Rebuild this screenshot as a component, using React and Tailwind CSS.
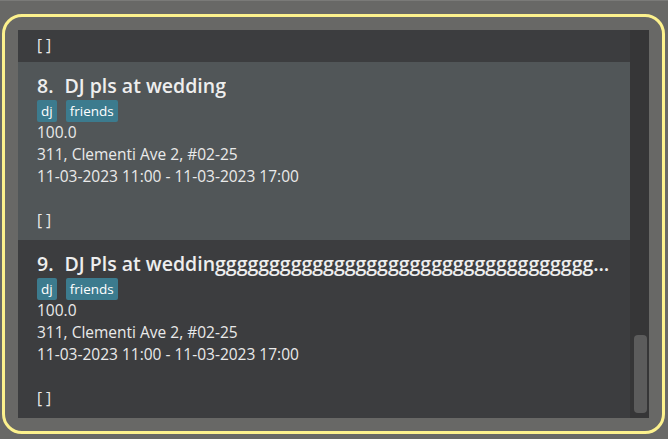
import React from 'react'

const font = { fontFamily: '"Open Sans", "Noto Sans", sans-serif' }

const events = [
  {
    idx: 8,
    name: 'DJ pls at wedding',
    tags: ['dj', 'friends'],
    rate: '100.0',
    address: '311, Clementi Ave 2, #02-25',
    time: '11-03-2023 11:00 - 11-03-2023 17:00',
    selected: true,
  },
  {
    idx: 9,
    name: 'DJ Pls at wedding' + 'g'.repeat(60),
    tags: ['dj', 'friends'],
    rate: '100.0',
    address: '311, Clementi Ave 2, #02-25',
    time: '11-03-2023 11:00 - 11-03-2023 17:00',
    selected: false,
  },
]

function EventCard({ ev }) {
  return (
    <div className={`h-[178px] pl-[19px] pr-[14px] pt-[10px] pb-[9px] ${ev.selected ? 'bg-[#515658]' : 'bg-[#3c3d3f]'}`}>
      <div className="flex h-[27px] items-center text-[19.5px] font-semibold leading-[27px] text-[#eeeeee]">
        <span className="shrink-0">{ev.idx}.</span>
        <span className="ml-[11px] truncate">{ev.name}</span>
      </div>
      <div className="mt-[1px] flex h-[22px] gap-[9px]">
        {ev.tags.map(t => (
          <span key={t} className="rounded-[2px] bg-[#3c7b8e] px-[4px] text-[13.5px] leading-[22px] text-white">{t}</span>
        ))}
      </div>
      <div className="-mt-[1px] text-[15.5px] leading-[22px] text-[#eaeaea]">
        <div>{ev.rate}</div>
        <div>{ev.address}</div>
        <div>{ev.time}</div>
        <div>&nbsp;</div>
        <div>[ ]</div>
      </div>
    </div>
  )
}

export default function App() {
  return (
    <div className="h-[439px] w-[668px] overflow-hidden border-t border-[#7a7a78] bg-[#686866]" style={font}>
      <div className="ml-[2px] mt-[13px] h-[420px] w-[663px] rounded-[20px] border-[3px] border-[#fcf18d] pb-[12px] pl-[13px] pr-[12px] pt-[13px]">
        <div className="flex h-[388px]">
          <div className="w-[612px] overflow-hidden bg-[#3c3d3f]">
            <div className="h-[32px] bg-[#3c3d3f] pl-[19px] pt-[4px] text-[15.5px] leading-[22px] text-[#eaeaea]">[ ]</div>
            {events.map(ev => (
              <EventCard key={ev.idx} ev={ev} />
            ))}
          </div>
          <div className="flex w-[19px] flex-col justify-end bg-[#363637] pb-[5px] pl-[4px] pr-[2px]">
            <div className="h-[78px] w-[13px] rounded-[4px] bg-[#5c5c5c]" />
          </div>
        </div>
      </div>
    </div>
  )
}
